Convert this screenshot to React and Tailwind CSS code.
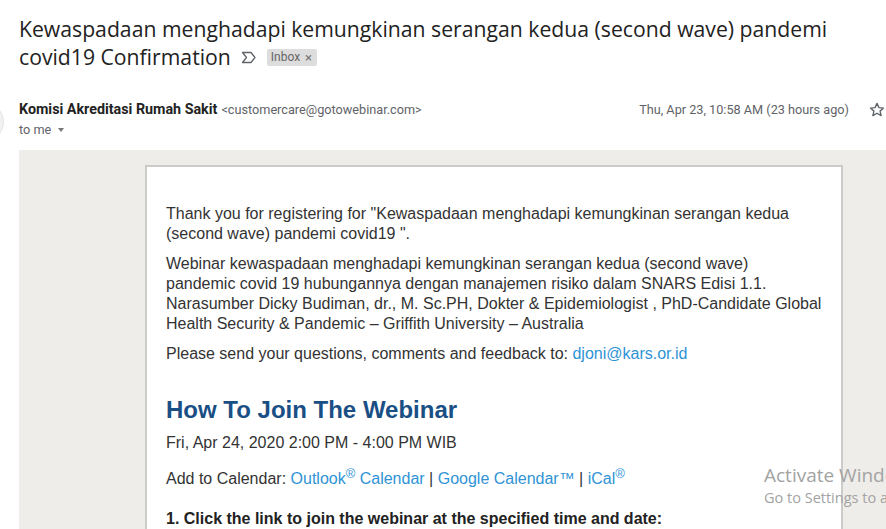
import React from "react";

const LabelMark = () => (
  <svg width="16" height="13" viewBox="0 0 16 13" fill="none">
    <path d="M1.5 1.5h8.5l4 5-4 5H1.5l4-5z" stroke="#5f6368" strokeWidth="1.3" strokeLinejoin="round" />
  </svg>
);

const StarIcon = () => (
  <svg width="18" height="18" viewBox="0 0 24 24" fill="none">
    <path
      d="M12 3.2l2.6 5.6 6.1.6-4.6 4.1 1.4 6-5.5-3.2-5.5 3.2 1.4-6-4.6-4.1 6.1-.6z"
      stroke="#5f6368"
      strokeWidth="1.8"
      strokeLinejoin="round"
    />
  </svg>
);

const Link = ({ children }) => <span className="text-[#2f93d6]">{children}</span>;

const Reg = () => <sup className="text-[13px]">®</sup>;

export default function App() {
  return (
    <div className="relative w-[886px] h-[529px] overflow-hidden bg-white">
      {/* subject */}
      <div className="pl-[19px] pr-[16px] pt-[15px]">
        <h1
          className="text-[21.2px] leading-[28px] text-[#222]"
          style={{ fontFamily: '"Open Sans", sans-serif' }}
        >
          Kewaspadaan menghadapi kemungkinan serangan kedua (second wave) pandemi covid19 Confirmation
          <span className="inline-flex items-center align-middle ml-[10px] mr-[10px] -mt-[4px]">
            <LabelMark />
          </span>
          <span
            className="inline-flex items-center align-middle -mt-[4px] h-[17px] pl-[4px] pr-[5px] rounded-[2px] bg-[#dddddd] text-[12px] leading-none text-[#666]"
            style={{ fontFamily: "Roboto, sans-serif" }}
          >
            Inbox<span className="ml-[5px] text-[13px] text-[#777]">×</span>
          </span>
        </h1>
      </div>

      {/* sender */}
      <div className="flex mt-[29px]" style={{ fontFamily: "Roboto, sans-serif" }}>
        <div className="w-[40px] h-[40px] -ml-[36px] mt-[2px] mr-[15px] rounded-full bg-[#f1f1f1] border border-[#e6e6e6] shrink-0" />
        <div className="flex-1">
          <div className="flex items-center h-[20px]">
            <span className="text-[14.3px] font-bold text-[#222]">Komisi Akreditasi Rumah Sakit</span>
            <span className="ml-[4px] text-[12.7px] text-[#5f6368]">&lt;customercare@gotowebinar.com&gt;</span>
            <span className="ml-auto text-[12.7px] text-[#5f6368]">Thu, Apr 23, 10:58 AM (23 hours ago)</span>
            <span className="ml-[19px] flex items-center">
              <StarIcon />
            </span>
          </div>
          <div className="flex items-center h-[20px] text-[12.7px] text-[#5f6368]">
            to me
            <span className="ml-[7px] w-0 h-0 border-l-[3.5px] border-r-[3.5px] border-t-[4px] border-l-transparent border-r-transparent border-t-[#777]" />
          </div>
        </div>
      </div>

      {/* email body */}
      <div className="ml-[19px] mt-[8px] pt-[15px] pb-[40px] bg-[#eeede9]">
        <div
          className="ml-[126px] w-[698px] bg-white border-2 border-[#cbcbca] px-[19px] pt-[37px] pb-[30px] text-[16px] leading-[20px] text-[#333]"
          style={{ fontFamily: '"Liberation Sans", Arial, sans-serif' }}
        >
          <p>Thank you for registering for "Kewaspadaan menghadapi kemungkinan serangan kedua (second wave) pandemi covid19 ".</p>
          <p className="mt-[10px]">
            Webinar kewaspadaan menghadapi kemungkinan serangan kedua (second wave) pandemic covid 19 hubungannya dengan
            manajemen risiko dalam SNARS Edisi 1.1. Narasumber Dicky Budiman, dr., M. Sc.PH, Dokter &amp; Epidemiologist ,
            PhD-Candidate Global Health Security &amp; Pandemic – Griffith University – Australia
          </p>
          <p className="mt-[10px]">
            Please send your questions, comments and feedback to: <Link>djoni@kars.or.id</Link>
          </p>
          <h2 className="mt-[32px] text-[24px] leading-[28px] font-bold text-[#1a4f85]">How To Join The Webinar</h2>
          <p className="mt-[9px]">Fri, Apr 24, 2020 2:00 PM - 4:00 PM WIB</p>
          <p className="mt-[16px]">
            Add to Calendar: <Link>Outlook<Reg /> Calendar</Link> | <Link>Google Calendar™</Link> |{" "}
            <Link>iCal<Reg /></Link>
          </p>
          <p className="mt-[20px] font-bold text-[#222]">1. Click the link to join the webinar at the specified time and date:</p>
        </div>
      </div>

      {/* windows activation watermark */}
      <div
        className="absolute left-[764px] top-[462px] text-[#a3a3a3] whitespace-nowrap pointer-events-none"
        style={{ fontFamily: '"Open Sans", sans-serif' }}
      >
        <div className="text-[19px] leading-[26px]">Activate Windows</div>
        <div className="text-[14.5px] leading-[20px]">Go to Settings to activate Windows.</div>
      </div>
    </div>
  );
}
